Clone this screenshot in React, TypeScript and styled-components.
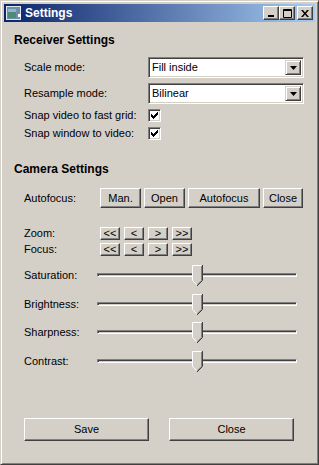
import * as React from 'react';
import styled, { createGlobalStyle } from 'styled-components';

const Global = createGlobalStyle`
  html, body {
    margin: 0;
    padding: 0;
    background: #d4d0c8;
  }
  body {
    font-family: "Liberation Sans", Arial, sans-serif;
    font-size: 11px;
    color: #000;
  }
`;

const Frame = styled.div`
  box-sizing: border-box;
  width: 319px;
  height: 465px;
  display: flex;
  flex-direction: column;
  background: #d4d0c8;
  border: 1px solid;
  border-color: #d4d0c8 #404040 #404040 #d4d0c8;
  box-shadow: inset 1px 1px #fff, inset -1px -1px #808080;
  padding: 3px;
`;

const TitleBar = styled.div`
  height: 18px;
  margin-bottom: 1px;
  display: flex;
  align-items: center;
  padding: 0 2px 0 2px;
  background: linear-gradient(to right, #0a246a, #a6caf0);
`;

const TitleText = styled.span`
  flex: 1;
  margin-left: 3px;
  color: #fff;
  font-weight: bold;
  font-size: 12px;
  line-height: 14px;
`;

const CaptionButtons = styled.div`
  display: flex;
`;

const CaptionButton = styled.div<{ $gap?: number }>`
  box-sizing: border-box;
  width: 16px;
  height: 14px;
  margin-left: ${(p) => p.$gap ?? 0}px;
  display: flex;
  align-items: center;
  justify-content: center;
  background: #d4d0c8;
  border: 1px solid;
  border-color: #fff #404040 #404040 #fff;
  box-shadow: inset -1px -1px #808080;
`;

const Client = styled.div`
  flex: 1;
  display: flex;
  flex-direction: column;
`;

const Heading = styled.div<{ $top: number }>`
  margin-top: ${(p) => p.$top}px;
  padding-left: 10px;
  font-weight: bold;
  font-size: 12px;
  line-height: 14px;
`;

const FormGrid = styled.div`
  margin: 10px 0 0 20px;
  display: grid;
  grid-template-columns: 124px 156px;
  grid-template-rows: 21px 21px 13px 13px;
  row-gap: 5px;
  align-items: center;
`;

const Label = styled.span<{ $w?: number }>`
  width: ${(p) => (p.$w ? `${p.$w}px` : 'auto')};
  flex: none;
  line-height: 13px;
  white-space: nowrap;
`;

const Combo = styled.div`
  box-sizing: border-box;
  height: 21px;
  display: flex;
  align-items: stretch;
  background: #fff;
  border: 1px solid;
  border-color: #808080 #fff #fff #808080;
  box-shadow: inset 1px 1px #404040, inset -1px -1px #d4d0c8;
  padding: 2px;
`;

const ComboText = styled.span`
  flex: 1;
  padding-left: 1px;
  line-height: 15px;
`;

const DropButton = styled.div`
  box-sizing: border-box;
  width: 16px;
  display: flex;
  align-items: center;
  justify-content: center;
  background: #d4d0c8;
  border: 1px solid;
  border-color: #d4d0c8 #404040 #404040 #d4d0c8;
  box-shadow: inset 1px 1px #fff, inset -1px -1px #808080;
`;

const Check = styled.div`
  box-sizing: border-box;
  width: 13px;
  height: 13px;
  display: flex;
  align-items: center;
  justify-content: center;
  background: #fff;
  border: 1px solid;
  border-color: #808080 #fff #fff #808080;
  box-shadow: inset 1px 1px #404040, inset -1px -1px #d4d0c8;
`;

const CameraRows = styled.div`
  margin-left: 20px;
  display: flex;
  flex-direction: column;
`;

const Row = styled.div<{ $top: number; $h: number }>`
  margin-top: ${(p) => p.$top}px;
  height: ${(p) => p.$h}px;
  display: flex;
  align-items: center;
`;

const ButtonGroup = styled.div<{ $gap: number }>`
  display: flex;
  gap: ${(p) => p.$gap}px;
  height: 100%;
`;

const PushButton = styled.button<{ $w: number }>`
  box-sizing: border-box;
  width: ${(p) => p.$w}px;
  height: 100%;
  padding: 0;
  margin: 0;
  font-family: inherit;
  font-size: 11px;
  line-height: 1;
  color: #000;
  background: #d4d0c8;
  border: 1px solid;
  border-color: #fff #404040 #404040 #fff;
  box-shadow: inset -1px -1px #808080;
  display: flex;
  align-items: center;
  justify-content: center;
`;

const SliderRow = styled(Row)`
  & + & {
    margin-top: 7.5px;
  }
`;

const Track = styled.div`
  position: relative;
  width: 200px;
  height: 21px;
`;

const Groove = styled.div`
  position: absolute;
  left: 0;
  right: 0;
  top: 8px;
  height: 4px;
  box-sizing: border-box;
  border: 1px solid;
  border-color: #808080 #fff #fff #808080;
  box-shadow: inset 1px 1px #404040, inset -1px -1px #d4d0c8;
`;

const Thumb = styled.svg`
  position: absolute;
  top: 0;
`;

const Footer = styled.div`
  margin-top: auto;
  padding: 0 0 20px 20px;
  height: 23px;
  display: flex;
  gap: 20px;
`;

const AppIcon = () => (
  <svg width={16} height={16} viewBox="0 0 16 16">
    <rect x={0.5} y={1.5} width={14} height={13} fill="#6f8fa8" stroke="#dfe6ee" />
    <rect x={2} y={4} width={8} height={9} fill="#4d8a78" />
    <rect x={2} y={4} width={8} height={3} fill="#8fb7c9" />
    <rect x={12} y={9} width={3} height={3} fill="#fff" />
  </svg>
);

const MinGlyph = () => (
  <svg width={8} height={8} viewBox="0 0 8 8">
    <rect x={1} y={6} width={6} height={2} fill="#000" />
  </svg>
);

const MaxGlyph = () => (
  <svg width={9} height={9} viewBox="0 0 9 9">
    <path d="M0.5 0.5h8v8h-8z M0.5 1.5h8" fill="none" stroke="#000" />
  </svg>
);

const CloseGlyph = () => (
  <svg width={8} height={7} viewBox="0 0 8 7">
    <path d="M0 0h2l2 2.5L6 0h2L5 3.5 8 7H6L4 4.5 2 7H0l3-3.5z" fill="#000" />
  </svg>
);

const Arrow = () => (
  <svg width={7} height={4} viewBox="0 0 7 4">
    <path d="M0 0h7L3.5 4z" fill="#000" />
  </svg>
);

// classic 7x7 pixel check mark
const checkPixels = [
  [6, 0, 1],
  [5, 1, 2],
  [0, 2, 1],
  [4, 2, 3],
  [0, 3, 2],
  [3, 3, 3],
  [0, 4, 5],
  [1, 5, 3],
  [2, 6, 1],
];

const CheckMark = () => (
  <svg width={7} height={7} viewBox="0 0 7 7" shapeRendering="crispEdges">
    {checkPixels.map(([x, y, w], i) => (
      <rect key={i} x={x} y={y} width={w} height={1} fill="#000" />
    ))}
  </svg>
);

const ThumbShape = ({ left }: { left: number }) => (
  <Thumb width={11} height={21} viewBox="0 0 11 21" style={{ left }}>
    <path d="M0 0h10v15l-5 5-5-5z" fill="#d4d0c8" />
    <path d="M0.5 15.5V0.5h9" fill="none" stroke="#fff" />
    <path d="M0.5 15.5l4.5 4.5" fill="none" stroke="#fff" />
    <path d="M10.5 0v15.5l-5.5 5.5" fill="none" stroke="#404040" />
    <path d="M9.5 1v14.3l-4.5 4.5" fill="none" stroke="#808080" />
  </Thumb>
);

const Slider = ({ label, value }: { label: string; value: number }) => (
  <SliderRow $top={0} $h={21}>
    <Label $w={73}>{label}</Label>
    <Track>
      <Groove />
      <ThumbShape left={Math.round((200 - 10) * value)} />
    </Track>
  </SliderRow>
);

const StepButtons = () => (
  <ButtonGroup $gap={4}>
    {['<<', '<', '>', '>>'].map((t) => (
      <PushButton key={t} $w={20}>
        {t}
      </PushButton>
    ))}
  </ButtonGroup>
);

const sliders = ['Saturation:', 'Brightness:', 'Sharpness:', 'Contrast:'];

const SliderStack = styled.div`
  margin-top: 9px;
  display: flex;
  flex-direction: column;
`;

export default function App() {
  return (
    <>
      <Global />
      <Frame>
        <TitleBar>
          <AppIcon />
          <TitleText>Settings</TitleText>
          <CaptionButtons>
            <CaptionButton>
              <MinGlyph />
            </CaptionButton>
            <CaptionButton>
              <MaxGlyph />
            </CaptionButton>
            <CaptionButton $gap={2}>
              <CloseGlyph />
            </CaptionButton>
          </CaptionButtons>
        </TitleBar>
        <Client>
          <Heading $top={10}>Receiver Settings</Heading>
          <FormGrid>
            <Label>Scale mode:</Label>
            <Combo>
              <ComboText>Fill inside</ComboText>
              <DropButton>
                <Arrow />
              </DropButton>
            </Combo>
            <Label>Resample mode:</Label>
            <Combo>
              <ComboText>Bilinear</ComboText>
              <DropButton>
                <Arrow />
              </DropButton>
            </Combo>
            <Label>Snap video to fast grid:</Label>
            <Check>
              <CheckMark />
            </Check>
            <Label>Snap window to video:</Label>
            <Check>
              <CheckMark />
            </Check>
          </FormGrid>

          <Heading $top={22}>Camera Settings</Heading>
          <CameraRows>
            <Row $top={12} $h={20}>
              <Label $w={76}>Autofocus:</Label>
              <ButtonGroup $gap={3}>
                <PushButton $w={41}>Man.</PushButton>
                <PushButton $w={41}>Open</PushButton>
                <PushButton $w={72}>Autofocus</PushButton>
                <PushButton $w={40}>Close</PushButton>
              </ButtonGroup>
            </Row>
            <Row $top={19} $h={13}>
              <Label $w={76}>Zoom:</Label>
              <StepButtons />
            </Row>
            <Row $top={3} $h={13}>
              <Label $w={76}>Focus:</Label>
              <StepButtons />
            </Row>
            <SliderStack>
              {sliders.map((s) => (
                <Slider key={s} label={s} value={0.5} />
              ))}
            </SliderStack>
          </CameraRows>

          <Footer>
            <PushButton $w={125}>Save</PushButton>
            <PushButton $w={125}>Close</PushButton>
          </Footer>
        </Client>
      </Frame>
    </>
  );
}
